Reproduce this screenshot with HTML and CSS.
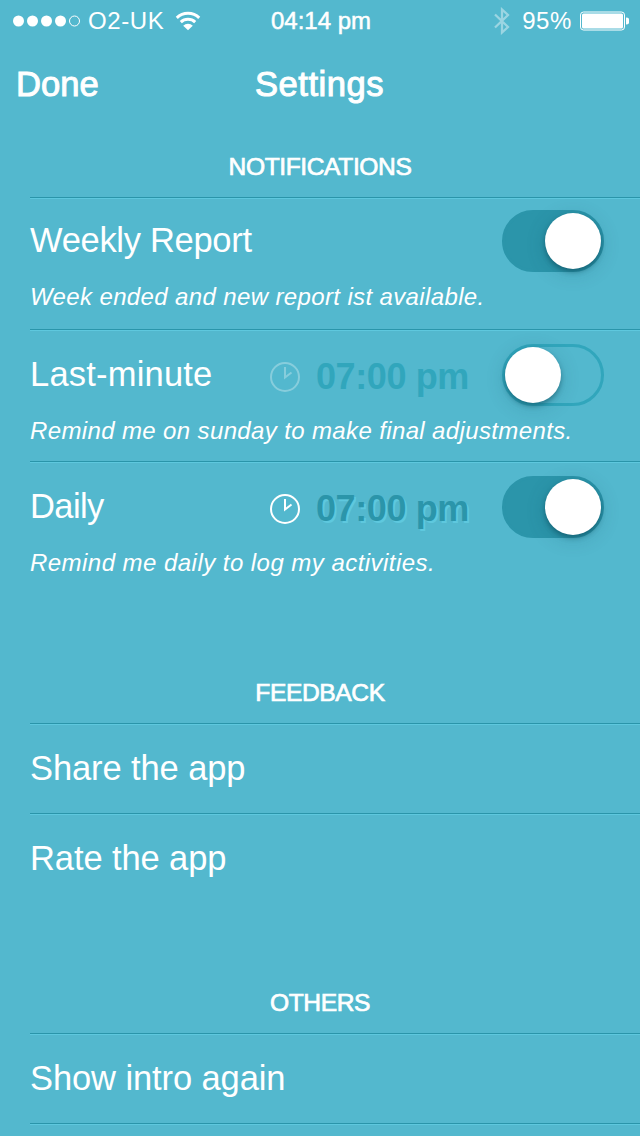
FILE: index.html
```html
<!DOCTYPE html>
<html lang="en">
	<head>
		<meta charset="utf-8" />
		<meta name="viewport" content="width=device-width, initial-scale=1.0" />
		<title>Settings</title>

		<link rel="stylesheet" href="styles.css">
	</head>

	<body>
		<div class="status-bar">
			<div class="status-left">
				<svg class="signal" width="68" height="12" viewBox="0 0 68 12">
					<circle cx="5.5" cy="6" r="5.5" />
					<circle cx="19.5" cy="6" r="5.5" />
					<circle cx="33.5" cy="6" r="5.5" />
					<circle cx="47.5" cy="6" r="5.5" />
					<circle class="empty" cx="61.5" cy="6" r="5" />
				</svg>
				<span class="carrier">O2-UK</span>
				<svg class="wifi" width="26" height="20" viewBox="0 0 26 20">
					<path d="M1.8 6.9A16 16 0 0 1 24.2 6.9" />
					<path d="M5.8 11.2A10.4 10.4 0 0 1 20.2 11.2" />
					<path class="dot" d="M13 19.3L8.2 14.8A6.8 6.8 0 0 1 17.8 14.8Z" />
				</svg>
			</div>
			<span class="clock">04:14 pm</span>
			<div class="status-right">
				<svg class="bluetooth" width="16" height="28" viewBox="0 0 16 28">
					<path d="M1 7.5L14 20L8 25.5V2.5L14 8L1 20.5" />
				</svg>
				<span class="percent">95%</span>
				<svg class="battery" width="49" height="20" viewBox="0 0 49 20">
					<rect class="shell" x="0.5" y="1" width="44" height="18" rx="3" />
					<rect x="2" y="2.5" width="41" height="15" rx="1.5" />
					<path d="M46 6.4A3.6 3.6 0 0 1 46 13.6Z" />
				</svg>
			</div>
		</div>

		<header class="nav">
			<a class="done">Done</a>
			<h1>Settings</h1>
		</header>

		<section class="notifications">
			<h2>NOTIFICATIONS</h2>
			<ul>
				<li class="option">
					<div class="option-main">
						<span class="label report">Weekly Report</span>
						<span class="toggle on"></span>
					</div>
					<p>Week ended and new report ist available.</p>
				</li>
				<li class="option">
					<div class="option-main">
						<span class="label last-minute">Last-minute</span>
						<span class="time disabled">
							<svg width="30" height="30" viewBox="0 0 30 30">
								<circle cx="15" cy="15" r="14" />
								<path d="M15 5V15.5L21.5 10.5" />
							</svg>
							<span>07:00 pm</span>
						</span>
						<span class="toggle"></span>
					</div>
					<p>Remind me on sunday to make final adjustments.</p>
				</li>
				<li class="option">
					<div class="option-main">
						<span class="label daily">Daily</span>
						<span class="time">
							<svg width="30" height="30" viewBox="0 0 30 30">
								<circle cx="15" cy="15" r="14" />
								<path d="M15 5V15.5L21.5 10.5" />
							</svg>
							<span>07:00 pm</span>
						</span>
						<span class="toggle on"></span>
					</div>
					<p class="wide">Remind me daily to log my activities.</p>
				</li>
			</ul>
		</section>

		<section class="feedback">
			<h2>FEEDBACK</h2>
			<ul>
				<li class="link">Share the app</li>
				<li class="link">Rate the app</li>
			</ul>
		</section>

		<section class="others">
			<h2>OTHERS</h2>
			<ul>
				<li class="link">Show intro again</li>
			</ul>
		</section>
	</body>
</html>
```

FILE: styles.css
```css
* {
	box-sizing: border-box;
}

body {
	margin: 0;
	height: 1136px;
	overflow: hidden;

	font-family: "Liberation Sans", Arial, sans-serif;
	color:      #fff;
	background: #53b8ce;
}

h1, h2, p, ul {
	margin:  0;
	padding: 0;
}

ul {
	list-style: none;
}



/**
 * Status bar
 */
.status-bar {
	display: grid;
	grid-template-columns: 1fr auto 1fr;
	align-items: center;

	height: 41px;
	padding: 1px 11px 0 13px;
	font-size:   24px;
	line-height: 38px;
}

.status-left,
.status-right {
	display:     flex;
	align-items: center;
}

.status-right {
	justify-content: flex-end;
}

.signal,
.battery {
	fill: #fff;
}

.signal .empty,
.battery .shell {
	fill:   none;
	stroke: #fff;
}

.carrier {
	margin-left: 7px;
	letter-spacing: 0.6px;
}

.wifi {
	margin-left: 11px;
	fill:   none;
	stroke: #fff;
	stroke-width: 3;
}

.wifi .dot {
	fill:   #fff;
	stroke: none;
}

.clock {
	-webkit-text-stroke: 0.5px #fff;
}

.bluetooth {
	fill:    none;
	stroke:  #fff;
	opacity: 0.42;
	stroke-width: 2.3;
}

.percent {
	margin: 0 8px 0 12px;
	letter-spacing: 0.6px;
}



/**
 * Navigation
 */
.nav {
	display: grid;
	grid-template-columns: 1fr auto 1fr;
	align-items: center;

	height: 87px;
	padding: 0 17px 0 16px;
	font-size: 34.6px;
	-webkit-text-stroke: 1px #fff;
}

.nav h1 {
	font-size:   34.6px;
	font-weight: normal;
	letter-spacing: 0.5px;
}



/**
 * Sections
 */
h2 {
	height: 69px;
	padding-top: 24px;

	font-size:   24.6px;
	line-height: 30px;
	font-weight: normal;
	text-align:  center;
	letter-spacing: -0.4px;
	-webkit-text-stroke: 0.7px #fff;
}

.notifications {
	height: 526px;
}

.feedback {
	height: 310px;
}

li {
	margin-left: 30px;
	border-top: 1px solid #2a95aa;
	box-shadow: inset 0 1px #5ec8de;
}

.others li {
	border-bottom: 1px solid #2a95aa;
	box-shadow: inset 0 1px #5ec8de, 0 1px #5ec8de;
}

.option {
	height: 132px;
	padding: 14px 36px 0 0;
}

.option:first-child {
	padding-top: 12px;
}

.option-main {
	display:     flex;
	align-items: center;
	height: 62px;
}

.label,
.link {
	font-size: 34.5px;
}

.label {
	flex: 1;
	padding-bottom: 2px;
}

.label.report {
	letter-spacing: -0.3px;
}

.label.last-minute {
	letter-spacing: 0.2px;
}

.label.daily {
	letter-spacing: -0.6px;
}

.option p {
	padding-top: 10px;
	font-size:   24px;
	line-height: 30px;
	font-style:  italic;
	letter-spacing: 0.37px;
}

.option p.wide {
	letter-spacing: 0.46px;
}

.link {
	height: 90px;
	line-height: 88px;
	letter-spacing: -0.1px;
}

.others .link {
	height: 91px;
}



/**
 * Reminder time
 */
.time {
	display:     flex;
	align-items: center;
	gap: 16px;
	margin: 4px 33px 0 0;

	font-size:   36px;
	font-weight: bold;
	letter-spacing: -0.37px;
	color: #2b95aa;
	text-shadow: 2px 2px #5ec8de;
}

.time svg {
	fill:   none;
	stroke: #fff;
	stroke-width: 2;
}

.time.disabled {
	color: #31a6bc;
	text-shadow: none;
}

.time.disabled svg {
	opacity: 0.3;
}



/**
 * Toggle switch
 */
.toggle {
	display: flex;
	width:  102px;
	height: 62px;
	border: 3px solid #31a6bc;
	border-radius: 31px;
}

.toggle::before {
	content: "";
	width:  56px;
	height: 56px;
	border-radius: 50%;
	background: #fff;
	box-shadow: 0 3px 5px rgba(0, 50, 65, 0.4), 0 4px 20px rgba(0, 70, 90, 0.2);
}

.toggle.on {
	justify-content: flex-end;
	border-color: #2b95aa;
	background:   #2b95aa;
}
```
